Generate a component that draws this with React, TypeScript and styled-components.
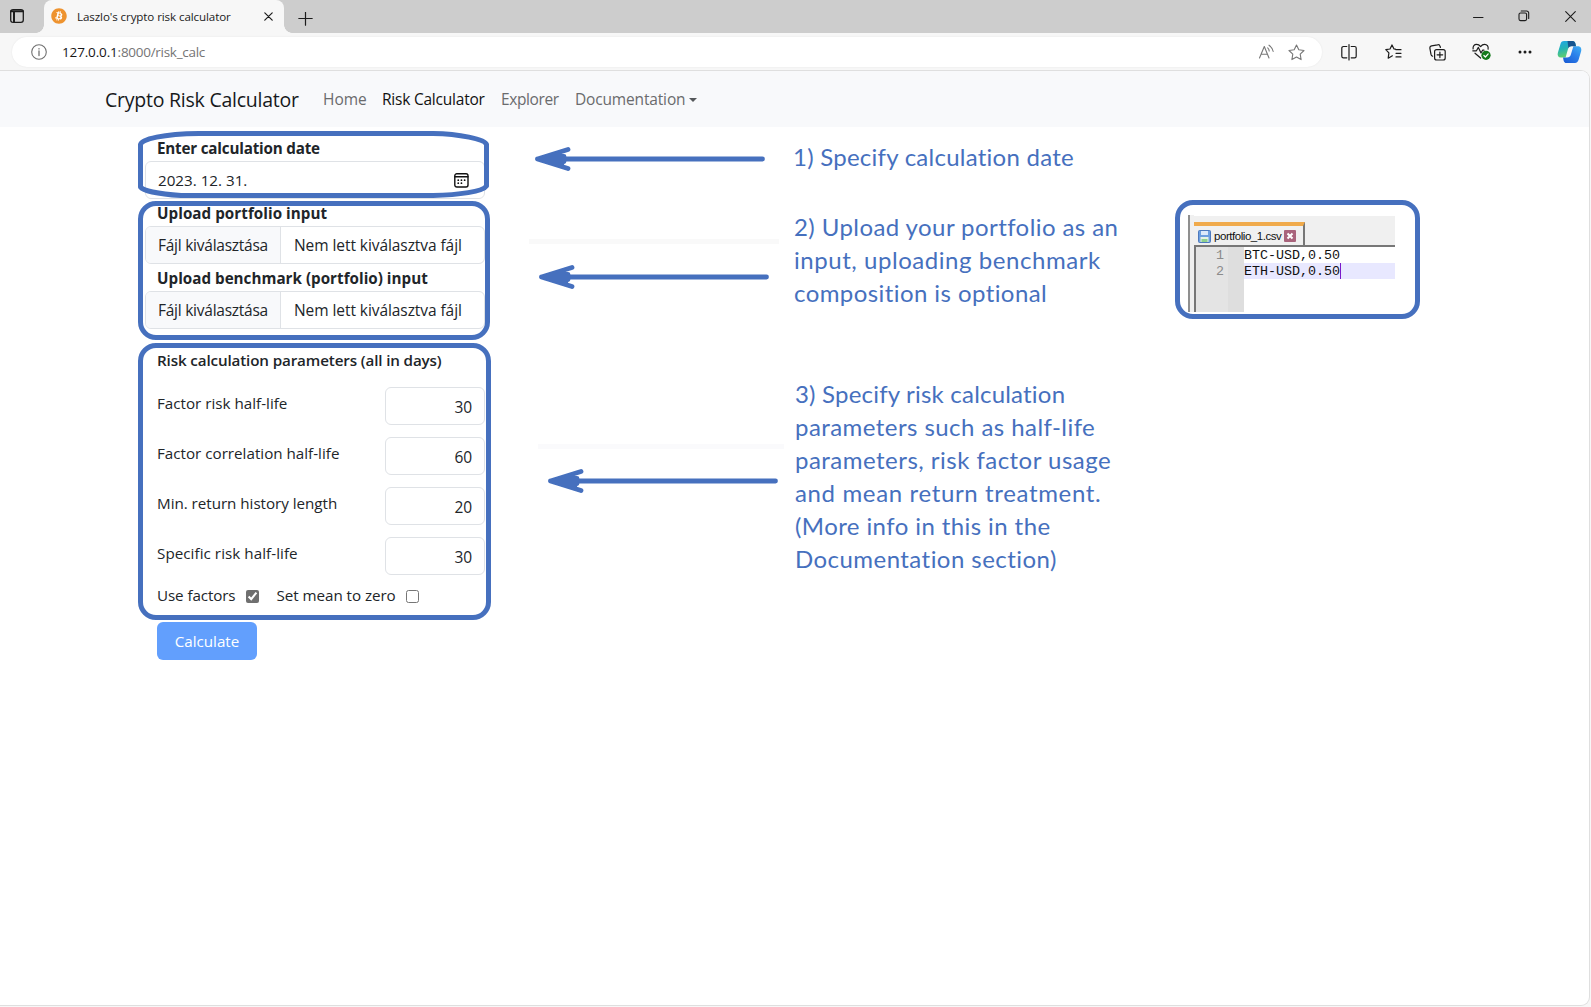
import React from "react";
import styled, { createGlobalStyle } from "styled-components";
import { FaBitcoin } from "react-icons/fa";

const BLUE = "#4670be";
const UI = '"Open Sans", "Noto Sans", sans-serif';

const Global = createGlobalStyle`
  *, *::before, *::after { box-sizing: border-box; }
  body { margin: 0; overflow: hidden; background: #f7f7f7; }
`;

const Browser = styled.div`
  display: flex;
  flex-direction: column;
  width: 1591px;
  height: 1007px;
  overflow: hidden;
  background: #f7f7f7;
  font-family: ${UI};
  color: #212529;
`;

const Txt = styled.span<{ $ls?: number }>`
  white-space: nowrap;
  letter-spacing: ${(p) => p.$ls ?? 0}px;
`;

/* ---------- tab strip ---------- */
const TabStrip = styled.div`
  display: flex;
  flex: none;
  height: 33px;
  background: #cdcdcd;
`;
const TabMenu = styled.div`
  width: 44px;
  padding: 9px 0 0 10px;
  svg { display: block; }
`;
const Tab = styled.div`
  position: relative;
  display: flex;
  align-items: center;
  width: 240px;
  padding: 0 11px 1px 7px;
  border-radius: 8px 8px 0 0;
  background: #f7f7f7;
  font-size: 11.6px;
  color: #1b1b1b;
  &::before, &::after {
    content: "";
    position: absolute;
    bottom: 0;
    width: 8px;
    height: 8px;
  }
  &::before { left: -8px; background: radial-gradient(circle at 0 0, transparent 7.5px, #f7f7f7 8px); }
  &::after { right: -8px; background: radial-gradient(circle at 100% 0, transparent 7.5px, #f7f7f7 8px); }
`;
const Coin = styled.span`
  display: flex;
  margin-right: 10px;
  border-radius: 50%;
  background: radial-gradient(circle, #fff 60%, transparent 62%);
  color: #ee932f;
`;
const TabClose = styled.span`
  display: flex;
  margin-left: auto;
`;
const NewTab = styled.div`
  padding: 9px 0 0 14px;
`;
const WindowButtons = styled.div`
  display: flex;
  margin: 0 -2px 0 auto;
`;
const WindowButton = styled.div`
  display: flex;
  align-items: center;
  justify-content: center;
  width: 46px;
  height: 32px;
`;

/* ---------- address bar ---------- */
const Toolbar = styled.div`
  display: flex;
  flex: none;
  height: 37px;
  padding: 4px 0 3px 12px;
`;
const Address = styled.div`
  display: flex;
  align-items: center;
  width: 1313px;
  height: 30px;
  padding: 0 15px 0 19px;
  border-radius: 15px;
  background: #fff;
  box-shadow: 0 0 2px rgba(0, 0, 0, 0.08);
  font-size: 13.5px;
`;
const Url = styled.div`
  flex: 1;
  padding-left: 15px;
  color: #757575;
  b { font-weight: 400; color: #161616; }
`;
const AddressIcon = styled.span`
  display: flex;
  justify-content: center;
  width: 40px;
  &:last-child { width: 20px; }
`;
const ToolIcons = styled.div`
  display: flex;
  margin-left: 5.5px;
`;
const ToolIcon = styled.span`
  display: flex;
  align-items: center;
  justify-content: center;
  width: 44px;
  height: 30px;
`;

/* ---------- page ---------- */
const Page = styled.div`
  position: relative;
  width: 1590px;
  height: 936px;
  border: solid #dfdfdf;
  border-width: 1px 1px 1px 0;
  border-radius: 0 9px 9px 0;
  background: #fff;
  overflow: hidden;
`;
const Navbar = styled.nav`
  display: flex;
  align-items: center;
  height: 56px;
  padding: 0 0 0 105px;
  background: #f8f9fb;
`;
const Brand = styled.a`
  width: 218px;
  font-size: 19.5px;
  color: #17191b;
`;
const NavLink = styled.a<{ $active?: boolean; $w: number }>`
  display: flex;
  align-items: center;
  width: ${(p) => p.$w}px;
  font-size: 15.5px;
  color: ${(p) => (p.$active ? "#111" : "#6a6b6d")};
`;
const Caret = styled.i`
  margin: 1px 0 0 4px;
  border: 4.5px solid transparent;
  border-top-color: #55585b;
  border-bottom: 0;
`;

const Content = styled.main`
  display: flex;
  align-items: flex-start;
`;
const Form = styled.form`
  display: flex;
  flex-direction: column;
  width: 340px;
  margin: 7px 0 0 145px;
  font-size: 15.2px;
`;
const Label = styled.label<{ $semi?: boolean }>`
  height: 27px;
  padding-left: 12px;
  line-height: 24px;
  padding-top: ${(p) => (p.$semi ? 0 : 2)}px;
  font-weight: ${(p) => (p.$semi ? 600 : 700)};
`;
const Field = styled.div`
  display: flex;
  align-items: center;
  height: 38px;
  border: 1px solid #dfe2e6;
  border-radius: 6px;
  background: #fff;
  overflow: hidden;
`;
const DateField = styled(Field)`
  justify-content: space-between;
  padding: 0 15px 0 12px;
`;
const FileButton = styled.span`
  display: flex;
  align-items: center;
  width: 135px;
  height: 100%;
  padding-left: 12px;
  border-right: 1px solid #dfe2e6;
  background: #f8f9fb;
  font-size: 15.5px;
`;
const FileName = styled.span`
  padding-left: 13px;
  font-size: 15.5px;
`;
const Params = styled.div`
  display: flex;
  flex-direction: column;
  gap: 12px;
  margin-top: 19px;
`;
const Param = styled.label`
  display: flex;
  justify-content: space-between;
  height: 38px;
  padding-left: 12px;
  line-height: 33px;
`;
const NumberInput = styled.input`
  width: 100px;
  height: 38px;
  padding: 2px 12px 0;
  border: 1px solid #dfe2e6;
  border-radius: 6px;
  font: 15.5px ${UI};
  letter-spacing: -0.1px;
  color: #212529;
  text-align: right;
`;
const Checks = styled.div`
  display: flex;
  align-items: center;
  height: 24px;
  margin-top: 8px;
  padding-left: 12px;
`;
const Check = styled.input`
  width: 13px;
  height: 13px;
  margin: 2px 18px 0 10px;
  accent-color: #6f6f6f;
`;
const Submit = styled.button`
  width: 100px;
  height: 38px;
  margin: 15px 0 0 12px;
  padding: 0;
  border: 0;
  border-radius: 6px;
  background: #629ffd;
  font: 15.2px ${UI};
  color: #fff;
`;

/* ---------- annotations ---------- */
const Arrows = styled.div`
  display: flex;
  flex-direction: column;
  width: 260px;
  margin-left: 44px;
  padding-top: 19px;
`;
const ArrowSvg = styled.svg<{ $x: number; $after: number }>`
  display: block;
  margin: 0 0 ${(p) => p.$after}px ${(p) => p.$x}px;
`;
const Smudge = styled.div<{ $x: number; $w: number; $after: number; $tint: string }>`
  width: ${(p) => p.$w}px;
  height: 5px;
  margin: 0 0 ${(p) => p.$after}px ${(p) => p.$x}px;
  background: ${(p) => p.$tint};
`;
const Notes = styled.div`
  display: flex;
  flex-direction: column;
  width: 382px;
  margin-left: 4px;
  padding-top: 13px;
`;
const Note = styled.p<{ $x: number; $after: number }>`
  display: flex;
  flex-direction: column;
  margin: 0 0 ${(p) => p.$after}px ${(p) => p.$x}px;
  font: 24px/33px Lato, "Open Sans", sans-serif;
  color: ${BLUE};
`;
const SampleFrame = styled.div`
  width: 245px;
  height: 119px;
  margin-top: 73px;
  padding: 10px 0 0 8px;
  border: 5px solid ${BLUE};
  border-radius: 18px;
`;
const Editor = styled.div`
  display: flex;
  flex-direction: column;
  width: 207px;
  height: 97px;
  padding-left: 4px;
  border-left: 2px solid #8f8f8f;
  background: #f0f0f0;
`;
const EditorTabs = styled.div`
  display: flex;
  height: 32px;
  padding-top: 6px;
  border-top: 1px solid #fff;
  border-bottom: 2px solid #777;
`;
const FileTab = styled.div`
  display: flex;
  align-items: center;
  gap: 3px;
  width: 111px;
  height: 24px;
  padding-left: 4px;
  border-top: 4px solid #f0aa4b;
  border-right: 2px solid #777;
  font: 11.5px "Liberation Sans", Arial, sans-serif;
  color: #111;
  svg { flex: none; }
`;
const Code = styled.div`
  flex: 1;
  border-left: 2px solid #777;
  background: linear-gradient(90deg, #e4e4e4 32px, #dedede 32px, #dedede 48px, #fff 48px);
`;
const CodeLine = styled.div<{ $on?: boolean }>`
  display: flex;
  height: 16px;
  font: 13.33px/17px "Liberation Mono", "Courier New", monospace;
  color: #111;
  i { width: 48px; padding-right: 20px; text-align: right; font-style: normal; color: #8b8b8b; }
  span { flex: 1; background: ${(p) => (p.$on ? "#e8e8ff" : "#fff")}; }
`;
const Cursor = styled.b`
  display: inline-block;
  width: 1px;
  height: 16px;
  background: #7a19c9;
  vertical-align: top;
`;
const Outline = styled.div<{ $x: number; $y: number; $w: number; $h: number }>`
  position: absolute;
  left: ${(p) => p.$x}px;
  top: ${(p) => p.$y}px;
  width: ${(p) => p.$w}px;
  height: ${(p) => p.$h}px;
  border: 5px solid ${BLUE};
  border-radius: 18px;
  pointer-events: none;
`;
const FlatOutline = styled.svg`
  position: absolute;
  left: 137px;
  top: 59px;
`;

const stroke = (c: string, w = 1.2) => ({
  fill: "none",
  stroke: c,
  strokeWidth: w,
  strokeLinecap: "round" as const,
  strokeLinejoin: "round" as const,
});
const INK = "#1c1c1c";

const Arrow = ({ x, after }: { x: number; after: number }) => (
  <ArrowSvg $x={x} $after={after} width="232" height="26" {...stroke(BLUE, 4.8)}>
    <path d="M3.5 13H228.5M34 3.5L3.5 13L34 22.5M9 12L28 8.5M9 14L28 17.5M12 13L30 10.5M12 13L30 15.5" />
  </ArrowSvg>
);

const params: [string, string, number][] = [
  ["Factor risk half-life", "30", 0],
  ["Factor correlation half-life", "60", 0],
  ["Min. return history length", "20", -0.03],
  ["Specific risk half-life", "30", 0.05],
];

const notes: { x: number; after: number; lines: [string, number][] }[] = [
  { x: 0, after: 37, lines: [["1) Specify calculation date", 0.25]] },
  {
    x: 1,
    after: 68,
    lines: [
      ["2) Upload your portfolio as an", 0.42],
      ["input, uploading benchmark", 0.55],
      ["composition is optional", 0.42],
    ],
  },
  {
    x: 2,
    after: 0,
    lines: [
      ["3) Specify risk calculation", 0.2],
      ["parameters such as half-life", 0.44],
      ["parameters, risk factor usage", 0.48],
      ["and mean return treatment.", 0.64],
      ["(More info in this in the", 0.41],
      ["Documentation section)", 0.45],
    ],
  },
];

export default function App() {
  return (
    <Browser>
      <Global />
      <TabStrip>
        <TabMenu>
          <svg width="14" height="14" {...stroke(INK, 1.3)}>
            <rect x=".7" y=".7" width="12.6" height="12.6" rx="2.4" />
            <path d="M1 2.2H13M4 3.5V13" strokeWidth="2" />
          </svg>
        </TabMenu>
        <Tab>
          <Coin><FaBitcoin size={16} /></Coin>
          <Txt $ls={-0.1}>Laszlo's crypto risk calculator</Txt>
          <TabClose>
            <svg width="9" height="9" {...stroke(INK)}><path d="M.8 .8L8.2 8.2M8.2 .8L.8 8.2" /></svg>
          </TabClose>
        </Tab>
        <NewTab>
          <svg width="15" height="14" {...stroke(INK)}><path d="M.8 6.5H14.2M7.5 .2V13.2" /></svg>
        </NewTab>
        <WindowButtons>
          <WindowButton><svg width="11" height="11" {...stroke(INK, 1)}><path d="M.5 6.5H10" /></svg></WindowButton>
          <WindowButton>
            <svg width="12" height="12" {...stroke(INK, 1.1)}>
              <rect x="1" y="3" width="7.6" height="7.6" rx="1.5" />
              <path d="M3.2 1H8.6A2 2 0 0 1 10.7 3V8.4" />
            </svg>
          </WindowButton>
          <WindowButton><svg width="11" height="11" {...stroke(INK, 1.1)}><path d="M.7 .7L10.3 10.3M10.3 .7L.7 10.3" /></svg></WindowButton>
        </WindowButtons>
      </TabStrip>

      <Toolbar>
        <Address>
          <svg width="16" height="16" {...stroke("#707070", 1.1)}>
            <circle cx="8" cy="8" r="7.3" />
            <path d="M8 7V11.5M8 4.6V4.9" strokeWidth="1.3" />
          </svg>
          <Url>
            <Txt $ls={-0.15}><b>127.0.0.1</b></Txt><Txt $ls={-0.28}>:8000/risk_calc</Txt>
          </Url>
          <AddressIcon>
            <svg width="17" height="16" {...stroke("#777", 1.1)}>
              <path d="M1.5 14L6.3 2.5L11 14M3 10.3H9.5M9.7 3.8C10.8 4.8 11.2 5.8 11.2 7M11 1.2C13.2 2.8 14.6 4.8 15.2 7.5" />
            </svg>
          </AddressIcon>
          <AddressIcon>
            <svg width="17" height="17" {...stroke("#777", 1.1)}>
              <path d="M8.5 1L10.8 5.8L16 6.5L12.2 10.2L13.1 15.6L8.5 13L3.9 15.6L4.8 10.2L1 6.5L6.2 5.8Z" />
            </svg>
          </AddressIcon>
        </Address>
        <ToolIcons>
          <ToolIcon>
            <svg width="16" height="17" {...stroke(INK)}>
              <path d="M5.8 2.5H2.4A1.6 1.6 0 0 0 .8 4.1V12.2A1.6 1.6 0 0 0 2.4 13.8H5.8M10.2 2.5H13.6A1.6 1.6 0 0 1 15.2 4.1V12.2A1.6 1.6 0 0 1 13.6 13.8H10.2M8 .6V16" />
            </svg>
          </ToolIcon>
          <ToolIcon>
            <svg width="17" height="16" {...stroke(INK)}>
              <path d="M10.4 5.2L9 5L7 .9L5 5L.8 5.6L3.9 8.9L3.2 14.2L7.4 11.8M11 5.7H16M11 9.3H16M11 12.9H16" />
            </svg>
          </ToolIcon>
          <ToolIcon>
            <svg width="17" height="17" {...stroke(INK)}>
              <rect x="5.6" y="5.6" width="10.6" height="10.4" rx="2" />
              <path d="M3.6 12.2A2.4 2.4 0 0 1 2 10.4L.9 4.3A2.2 2.2 0 0 1 2.6 1.8L8.5 .8A2.2 2.2 0 0 1 11.1 2.5L11.4 3.5M10.9 8V13.6M8.1 10.8H13.7" />
            </svg>
          </ToolIcon>
          <ToolIcon>
            <svg width="19" height="18" {...stroke(INK)}>
              <path d="M1.1 5.8C.7 3.2 2.3 1.4 4.6 1.4C6.2 1.4 7.6 2.3 8.6 3.6C9.6 2.3 11 1.4 12.6 1.4C15 1.4 16.6 3.3 16.1 6.2M.8 7.8H4.4L6.4 4.4L9 10L10.6 7.2H12M3 10.2L8.6 15" />
              <circle cx="14" cy="12.3" r="4.6" fill="#14791b" stroke="none" />
              <path d="M11.9 12.5L13.4 14L16.2 10.9" stroke="#fff" />
            </svg>
          </ToolIcon>
          <ToolIcon>
            <svg width="14" height="4" fill={INK}><circle cx="2" cy="2" r="1.5" /><circle cx="7" cy="2" r="1.5" /><circle cx="12" cy="2" r="1.5" /></svg>
          </ToolIcon>
          <ToolIcon>
            <svg width="25" height="24" viewBox="0 0 25 24">
              <defs>
                <linearGradient id="cpl" x1="0" y1="0" x2=".3" y2="1"><stop offset="0" stopColor="#1fa6e8" /><stop offset=".5" stopColor="#25b3b5" /><stop offset="1" stopColor="#62cf6c" /></linearGradient>
                <linearGradient id="cpr" x1="1" y1="0" x2=".2" y2="1"><stop offset="0" stopColor="#3fb2f5" /><stop offset=".5" stopColor="#2b7fea" /><stop offset="1" stopColor="#1c5fd6" /></linearGradient>
              </defs>
              <path d="M7 1H15.5C17.3 1 18 2.2 18.4 3.6L19 6H14.5C12.3 6 11.6 7.3 11 9L8.6 17.5H4C1.3 17.5 .2 15.5 .8 13L3.4 4.2C4 2.2 5 1 7 1Z" fill="url(#cpl)" />
              <path d="M18 23H9.5C7.7 23 7 21.8 6.6 20.4L6 17.6H10C12.2 17.6 13.2 16.5 13.8 14.8L16.4 6.2H21C23.7 6.2 24.8 8.4 24.2 11L21.6 19.8C21 21.8 20 23 18 23Z" fill="url(#cpr)" />
              <path d="M10.5 1H15.5C17.3 1 18 2.2 18.4 3.6L19 6.2H14.5C12.8 6.2 12 7 11.4 8.2Z" fill="#16548f" />
            </svg>
          </ToolIcon>
        </ToolIcons>
      </Toolbar>

      <Page>
        <Navbar>
          <Brand><Txt $ls={-0.24}>Crypto Risk Calculator</Txt></Brand>
          <NavLink $w={59}><Txt $ls={-0.04}>Home</Txt></NavLink>
          <NavLink $w={119} $active><Txt $ls={-0.22}>Risk Calculator</Txt></NavLink>
          <NavLink $w={74}><Txt $ls={-0.4}>Explorer</Txt></NavLink>
          <NavLink $w={130}><Txt $ls={-0.16}>Documentation</Txt><Caret /></NavLink>
        </Navbar>

        <Content>
          <Form>
            <Label><Txt $ls={-0.19}>Enter calculation date</Txt></Label>
            <DateField>
              <Txt>2023. 12. 31.</Txt>
              <svg width="15" height="15" {...stroke("#111", 1.4)}>
                <rect x=".8" y=".8" width="13.2" height="13.2" rx="2" />
                <path d="M1 3.8H14" />
                <path d="M4.2 10.2H4.3M7.4 10.2H7.5M4.2 7.2H4.3M7.4 7.2H7.5M10.6 7.2H10.7" strokeWidth="1.7" />
              </svg>
            </DateField>
            <Label><Txt $ls={0.05}>Upload portfolio input</Txt></Label>
            <Field>
              <FileButton><Txt $ls={-0.25}>Fájl kiválasztása</Txt></FileButton>
              <FileName><Txt $ls={-0.07}>Nem lett kiválasztva fájl</Txt></FileName>
            </Field>
            <Label><Txt $ls={0.02}>Upload benchmark (portfolio) input</Txt></Label>
            <Field>
              <FileButton><Txt $ls={-0.25}>Fájl kiválasztása</Txt></FileButton>
              <FileName><Txt $ls={-0.07}>Nem lett kiválasztva fájl</Txt></FileName>
            </Field>
            <Params>
              <Label $semi style={undefined}><Txt $ls={-0.13}>Risk calculation parameters (all in days)</Txt></Label>
              {params.map(([name, value, ls], i) => (
                <Param key={name}>
                  <Txt $ls={ls}>{name}</Txt>
                  <NumberInput defaultValue={value} />
                </Param>
              ))}
            </Params>
            <Checks>
              <Txt $ls={-0.1}>Use factors</Txt>
              <Check type="checkbox" defaultChecked />
              <Txt $ls={-0.05}>Set mean to zero</Txt>
              <Check type="checkbox" />
            </Checks>
            <Submit type="button">Calculate</Submit>
          </Form>

          <Arrows>
            <Arrow x={5} after={67} />
            <Smudge $x={0} $w={250} $after={20} $tint="#f9f9f9" />
            <Arrow x={9} after={154} />
            <Smudge $x={9} $w={246} $after={19} $tint="#fafafc" />
            <Arrow x={18} after={0} />
          </Arrows>

          <Notes>
            {notes.map((n) => (
              <Note key={n.x} $x={n.x} $after={n.after}>
                {n.lines.map(([t, ls]) => <Txt key={t} $ls={ls}>{t}</Txt>)}
              </Note>
            ))}
          </Notes>

          <SampleFrame>
            <Editor>
              <EditorTabs>
                <FileTab>
                  <svg width="13" height="13">
                    <rect x=".5" y=".5" width="12" height="12" rx="1" fill="#6d9fe0" stroke="#4d79bd" />
                    <rect x="3" y="1" width="7" height="4" fill="#dce9fa" />
                    <rect x="2.5" y="7" width="8" height="5" fill="#e6f3e6" />
                    <rect x="3.5" y="9" width="6" height="3" fill="#8ed08e" />
                  </svg>
                  <Txt $ls={-0.45}>portfolio_1.csv</Txt>
                  <svg width="12" height="12">
                    <rect width="12" height="12" rx="1" fill="#a9647c" />
                    <path d="M3.5 3.5L8.5 8.5M8.5 3.5L3.5 8.5" stroke="#fff" strokeWidth="2" />
                  </svg>
                </FileTab>
              </EditorTabs>
              <Code>
                <CodeLine><i>1</i><span>BTC-USD,0.50</span></CodeLine>
                <CodeLine $on><i>2</i><span>ETH-USD,0.50<Cursor /></span></CodeLine>
              </Code>
            </Editor>
          </SampleFrame>
        </Content>

        <FlatOutline width="354" height="68" {...stroke(BLUE, 5)}>
          <path d="M3.5 57V14.5C4.5 9 26 4 62 3.5H296C322 4 348 9 349.500 14.500V56C346 61.500 322 65 296 65.500H44C20 64 6 60.500 3.500 57Z" />
        </FlatOutline>
        <Outline $x={138} $y={130} $w={352} $h={139} />
        <Outline $x={138} $y={272} $w={353} $h={277} />
      </Page>
    </Browser>
  );
}
